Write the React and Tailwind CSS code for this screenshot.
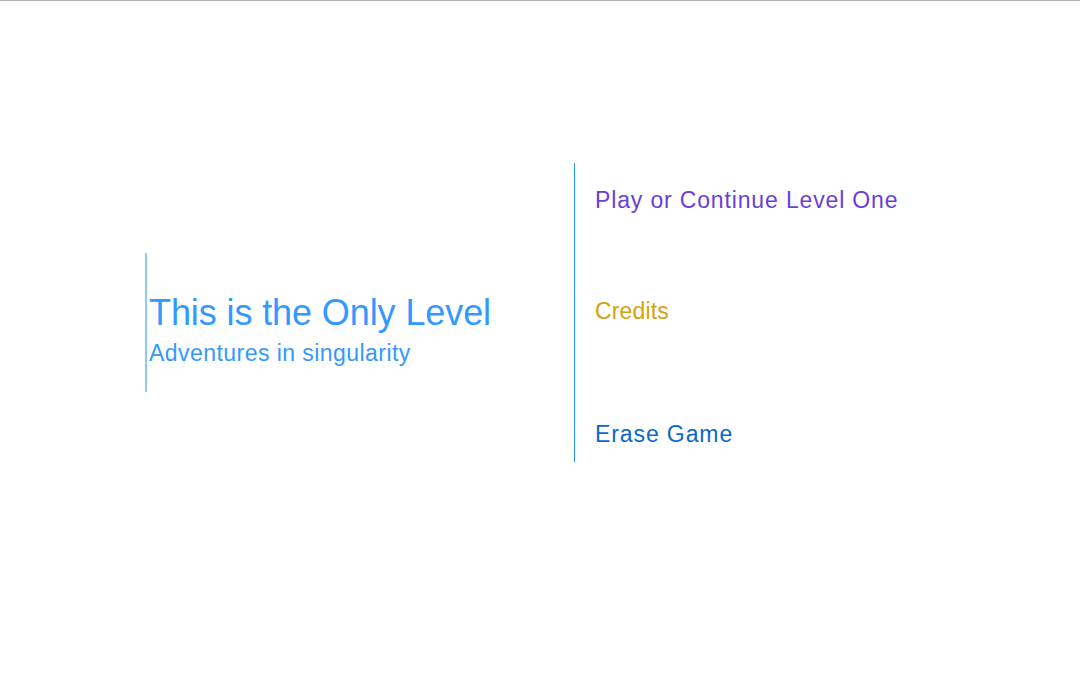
export default function App() {
  return (
    <div className="h-[700px] w-[1080px] border-t border-[#b0b0b0] bg-white flex items-start font-['Liberation_Sans',Arial,sans-serif] overflow-hidden">
      <div className="ml-[145px] mt-[252px] h-[139px] w-[429px] border-l-2 border-[#90caf9] pl-[2px] pt-[42px]">
        <h1 className="text-[36px] leading-[36px] font-normal tracking-[-0.1px] text-[#3399ff] whitespace-nowrap">This is the Only Level</h1>
        <p className="mt-[11px] text-[23px] leading-[23px] tracking-[0.45px] text-[#3399ff] whitespace-nowrap">Adventures in singularity</p>
      </div>
      <div className="mt-[162px] h-[299px] border-l border-[#2196f3] pl-[20px] pt-[26px] flex flex-col items-start">
        <button className="text-[23px] leading-[23px] tracking-[0.85px] text-[#6a3fd6] whitespace-nowrap">Play or Continue Level One</button>
        <button className="mt-[88px] text-[23px] leading-[23px] tracking-[0.15px] text-[#d4a20e] whitespace-nowrap">Credits</button>
        <button className="mt-[100px] text-[23px] leading-[23px] tracking-[0.9px] text-[#0b67d0] whitespace-nowrap">Erase Game</button>
      </div>
    </div>
  );
}
